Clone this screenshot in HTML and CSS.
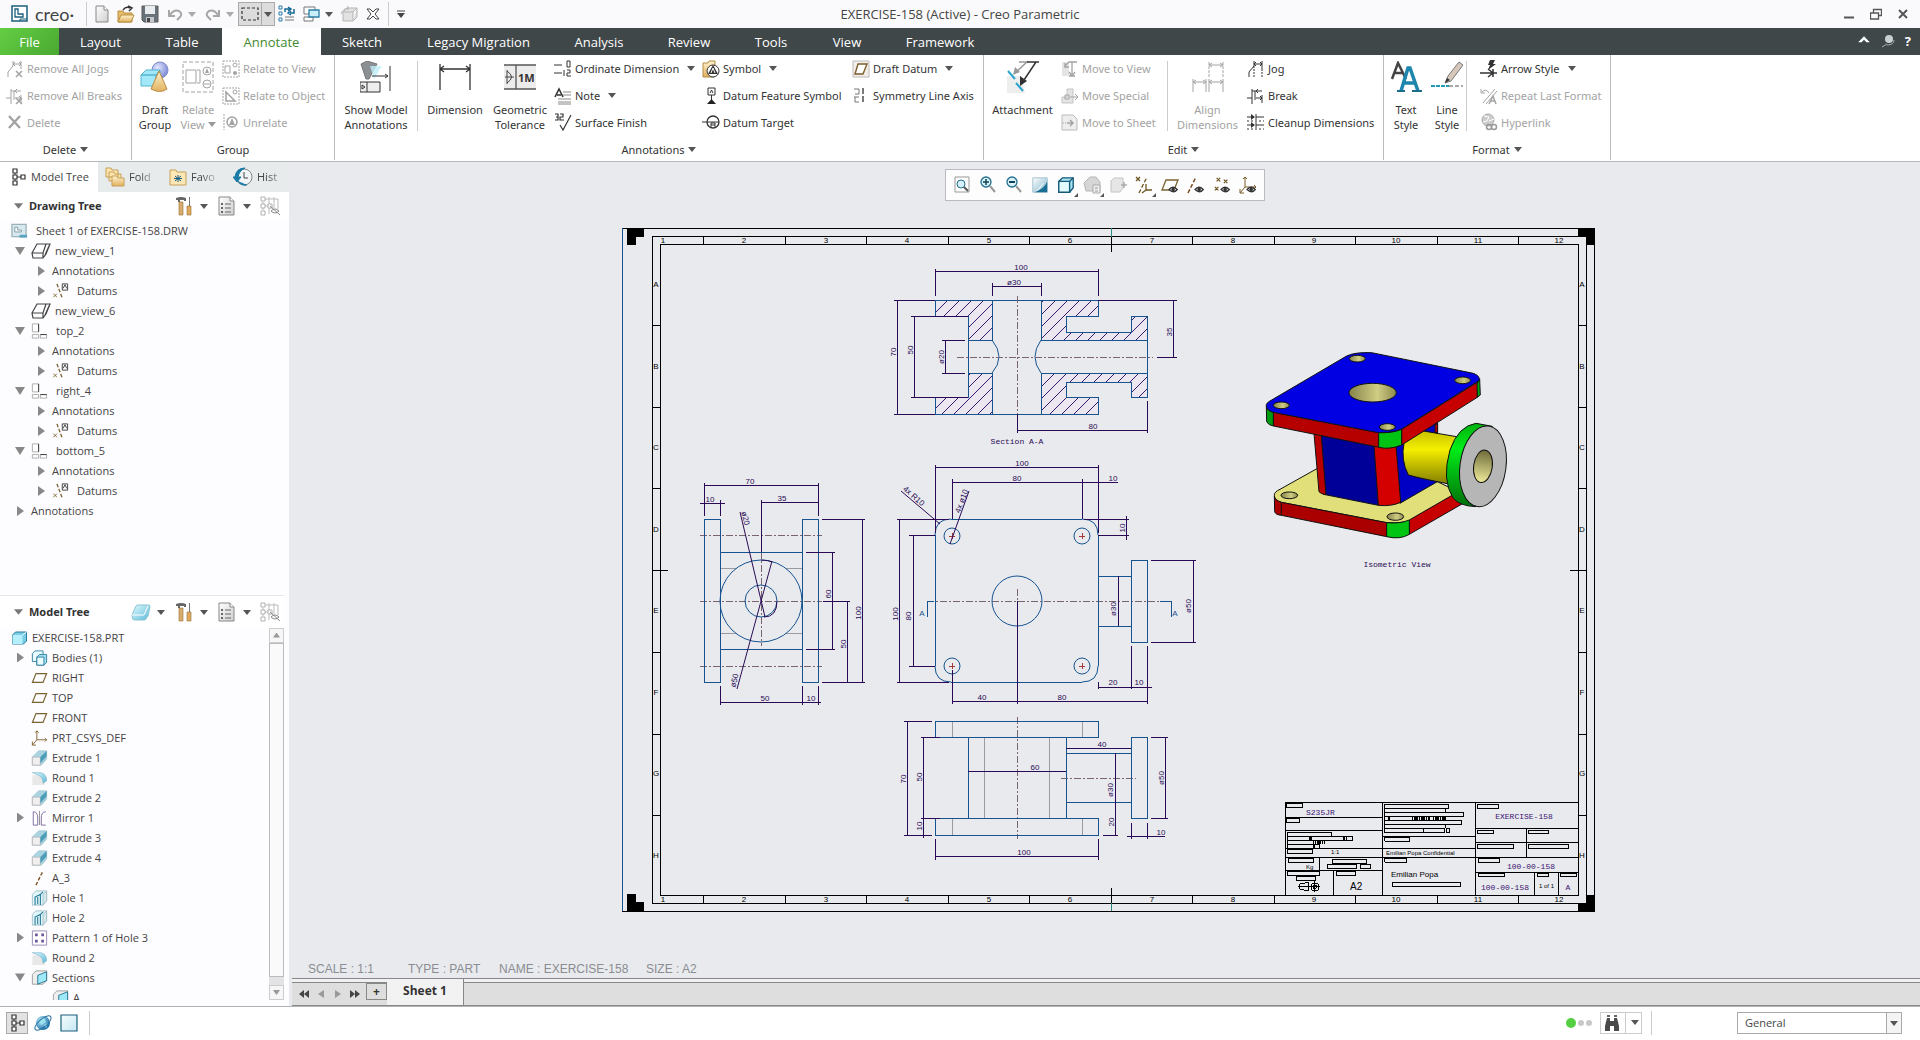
FILE: index.html
```html
<!DOCTYPE html>
<html lang="en">
<head>
<meta charset="utf-8">
<title>EXERCISE-158 (Active) - Creo Parametric</title>
<link rel="stylesheet" href="styles.css">
</head>
<body>
<svg class="sprite" aria-hidden="true">
<defs>
<linearGradient id="g-sky" x1="0" y1="0" x2="1" y2="1"><stop offset="0" stop-color="#e2fbff"/><stop offset="1" stop-color="#5cb9d8"/></linearGradient>
<linearGradient id="g-tone" x1="0" y1="0" x2="1" y2="1"><stop offset="0" stop-color="#fff"/><stop offset="1" stop-color="#7fb5cb"/></linearGradient>
<linearGradient id="g-gold" x1="0" y1="0" x2="0" y2="1"><stop offset="0" stop-color="#fff3cf"/><stop offset="1" stop-color="#e2b15e"/></linearGradient>
<linearGradient id="g-grey" x1="0" y1="0" x2="1" y2="1"><stop offset="0" stop-color="#fff"/><stop offset="1" stop-color="#cfcfcf"/></linearGradient>
<radialGradient id="g-ball" cx=".35" cy=".35" r=".7"><stop offset="0" stop-color="#e4e8ff"/><stop offset="1" stop-color="#7d8ad4"/></radialGradient>
<radialGradient id="g-globe" cx=".35" cy=".35" r=".7"><stop offset="0" stop-color="#bff0ff"/><stop offset="1" stop-color="#1469a5"/></radialGradient>
</defs>
<symbol id="caret" viewBox="0 0 8 5"><path d="M0 0h8L4 5z" fill="currentColor"/></symbol>
<symbol id="logo" viewBox="0 0 18 18"><path d="M1 1h15v15H1z" fill="#fff" stroke="#1c5f7d" stroke-width="1.5"/><path d="M4 4v8h8V9H7V4z" fill="none" stroke="#1c5f7d" stroke-width="1.3"/><path d="M9 16v-2h7" fill="none" stroke="#1c5f7d"/></symbol>
<symbol id="new" viewBox="0 0 18 18"><path d="M3 1h8l4 4v12H3z" fill="url(#g-grey)" stroke="#888"/><path d="M11 1v4h4" fill="#fff" stroke="#888"/></symbol>
<symbol id="open" viewBox="0 0 18 18"><path d="M1 6h5l1 2h8v9H1z" fill="#e7bd6a" stroke="#b98e40"/><path d="M4 10h13l-3 7H1z" fill="url(#g-gold)" stroke="#b98e40"/><path d="M6 5q3-4 7-2M11 1l4 2-3 3" fill="none" stroke="#333" stroke-width="1.5"/></symbol>
<symbol id="save" viewBox="0 0 18 18"><path d="M1 1h16v16H3l-2-2z" fill="#68727a" stroke="#5a5a5a"/><path d="M4 1h10v8H4z" fill="#e9edf0"/><path d="M5 12h8v5H5z" fill="#c4c9cd"/><path d="M6 13h3v4H6z" fill="#454545"/></symbol>
<symbol id="undo" viewBox="0 0 18 18"><path d="M3 5v6h6M4 10q4-6 9-4 4 3 1 6l-3 3" fill="none" stroke="#a6a6a6" stroke-width="2"/></symbol>
<symbol id="redo" viewBox="0 0 18 18"><path d="M15 5v6H9M14 10Q10 4 5 6 1 9 4 12l3 3" fill="none" stroke="#a6a6a6" stroke-width="2"/></symbol>
<symbol id="marquee" viewBox="0 0 18 18"><path d="M1 3h16v12H1z" fill="none" stroke="#333" stroke-width="1.2" stroke-dasharray="3 2"/></symbol>
<symbol id="regen" viewBox="0 0 18 18"><path d="M1 1h3v3H1zM1 7h3v3H1zM1 13h3v3H1z" fill="none" stroke="#2b7fa6"/><path d="M7 12h9M7 15h9" stroke="#777"/><path d="M7 7V4h5M10 2l3 2-3 2M16 4v4h-4M13 6l-3 2 3 2" fill="none" stroke="#156a96" stroke-width="1.5"/></symbol>
<symbol id="windows" viewBox="0 0 18 18"><path d="M1 2h11v7H1z" fill="#fff" stroke="#777"/><path d="M1 12h9v4H1z" fill="#fff" stroke="#777"/><path d="M6 5h10v7H6z" fill="#c9effa" stroke="#2b7fa6" stroke-width="1.3"/></symbol>
<symbol id="greybox" viewBox="0 0 18 18"><path d="M3 7h10v9H3zM3 7l4-4h10l-4 4M13 16l4-4V3" fill="#e2e2e2" stroke="#b5b5b5"/><path d="M1 9q2-6 8-6l-2-2M9 3L7 5" fill="none" stroke="#b5b5b5"/></symbol>
<symbol id="closewin" viewBox="0 0 18 18"><path d="M3 4h3l3 3 3-3h3l-4 5 4 5h-3l-3-3-3 3H3l4-5z" fill="#fff" stroke="#444"/></symbol>
<symbol id="jogs" viewBox="0 0 18 18"><path d="M2 17v-5l5-6V1M15 1v8M7 4h8M9 2L7 4l2 2M13 2l2 2-2 2" fill="none" stroke="currentColor"/></symbol>
<symbol id="jogline" viewBox="0 0 18 18"><path d="M7 6v11M15 9v8" stroke="currentColor" stroke-dasharray="2 1"/></symbol>
<symbol id="break" viewBox="0 0 18 18"><path d="M0 11h5M9 11h6M5 2v15M8 4v9M5 4h10M11 2L9 4l2 2M13 9l2 2-2 2M15 8v8" fill="none" stroke="currentColor"/></symbol>
<symbol id="smallx" viewBox="0 0 18 18"><path d="M10 11l6 6M16 11l-6 6" stroke="currentColor" stroke-width="1.5"/></symbol>
<symbol id="bigx" viewBox="0 0 18 18"><path d="M3 3l11 12M14 3L3 15" stroke="currentColor" stroke-width="2.4"/></symbol>
<symbol id="draftgroup" viewBox="0 0 32 32"><circle cx="21" cy="9" r="8" fill="url(#g-ball)" stroke="#7f8acb"/><path d="M2 14l5-5h14l-4 5zM2 14h15v11H2zM17 14l4-5v10l-4 6z" fill="#a3e8f8" stroke="#57b4cf"/><path d="M20 10l8 18q-7 5-16 0z" fill="url(#g-gold)" stroke="#ba8d43"/></symbol>
<symbol id="relview" viewBox="0 0 32 32"><path d="M1 1h30v30H1z" fill="none" stroke="currentColor" stroke-dasharray="4 2"/><path d="M4 9h10v13H4zM15 9h3v13h-3" fill="none" stroke="currentColor"/><circle cx="25" cy="10" r="4" fill="none" stroke="currentColor"/><path d="M23 12l2-5 2 5z" fill="currentColor"/><circle cx="25" cy="23" r="4" fill="none" stroke="currentColor"/><path d="M22 23h6" stroke="currentColor"/></symbol>
<symbol id="rel1" viewBox="0 0 18 18"><path d="M1 1h16v16H1z" fill="none" stroke="currentColor" stroke-dasharray="2 1"/><path d="M3 6h5v7H3z" fill="none" stroke="currentColor"/><circle cx="13" cy="5" r="2" fill="none" stroke="currentColor"/><circle cx="13" cy="13" r="2" fill="currentColor"/></symbol>
<symbol id="rel2" viewBox="0 0 18 18"><path d="M1 1h16v16H1z" fill="none" stroke="currentColor" stroke-dasharray="2 1"/><path d="M4 5v9h9z" fill="none" stroke="currentColor" stroke-width="1.5"/><circle cx="13" cy="5" r="2" fill="none" stroke="currentColor"/></symbol>
<symbol id="unrel" viewBox="0 0 18 18"><path d="M2 1v16" stroke="currentColor" stroke-dasharray="2 1"/><circle cx="10" cy="9" r="5" fill="none" stroke="currentColor" stroke-width="1.5"/><path d="M7 12l3-7 3 7z" fill="currentColor"/></symbol>
<symbol id="showann" viewBox="0 0 32 32"><path d="M1 3l6-3 10 3-8 15H6z" fill="#8b9094" stroke="#777"/><path d="M10 5l12 0-8 13z" fill="#bfeef8" opacity=".8"/><path d="M12 15h16M25 13l3 2-3 2M30 5v25" fill="none" stroke="#333"/><path d="M0 21h20v10H0zM7 21v10" fill="#eee" stroke="#333"/><path d="M2 24l3 2-3 2z" fill="none" stroke="#333"/></symbol>
<symbol id="dimension" viewBox="0 0 32 32"><path d="M1 3v26M31 3v26M1 8h30M5 5L1 8l4 3M27 5l4 3-4 3" fill="none" stroke="currentColor" stroke-width="1.3"/></symbol>
<symbol id="gtol" viewBox="0 0 32 32"><path d="M0 4h32v24H0z" fill="#ececec"/><path d="M0 4h32M0 28h32M12 4v24" stroke="#555" stroke-width="1.3"/><path d="M1 16h9M3 9v14M3 10q9 6 0 12" fill="none" stroke="#444"/></symbol>
<symbol id="ordinate" viewBox="0 0 18 18"><path d="M0 5h8M0 13h8" stroke="currentColor"/><path d="M13 1h3v6h-3zM10 10v6M13 10h3v3h-3v3h4" fill="none" stroke="currentColor"/></symbol>
<symbol id="note" viewBox="0 0 18 18"><path d="M9 5h8M9 8h8M4 12h13M4 15h13M4 17h13" stroke="#888"/><path d="M1 10L5 2l4 8M3 8h4" fill="none" stroke="#333" stroke-width="1.6"/></symbol>
<symbol id="surface" viewBox="0 0 18 18"><path d="M1 1h3v3H2h2v3H1M6 1h3v3H6v3h4M6 12l3 5L17 2" fill="none" stroke="currentColor" stroke-width="1.2"/></symbol>
<symbol id="symbol" viewBox="0 0 18 18"><path d="M1 3h5l1-2h6v4h-1v12H1z" fill="url(#g-gold)" stroke="#b38b43"/><circle cx="11" cy="11" r="6" fill="#fff" stroke="#333"/><path d="M6 14l5-9 5 9z" fill="#333"/><path d="M9 13l2-5 2 5" fill="none" stroke="#fff"/></symbol>
<symbol id="dfs" viewBox="0 0 18 18"><path d="M6 1h7v7H6zM9.500 8v5" fill="none" stroke="#333"/><path d="M8 6l1.500-3L11 6" fill="none" stroke="#333"/><path d="M5 17l4.500-5 4.500 5z" fill="#222"/></symbol>
<symbol id="dtarget" viewBox="0 0 18 18"><circle cx="11" cy="9" r="6" fill="none" stroke="#333" stroke-width="1.300"/><path d="M0 9h17M9 15v-5h4v5M9 12h4" fill="none" stroke="#333"/></symbol>
<symbol id="ddatum" viewBox="0 0 18 18"><path d="M1 1h16v16H1z" fill="#f4eeea" stroke="#bbb"/><path d="M6 4h9l-4 10H3z" fill="#fff" stroke="#7a5d2d" stroke-width="1.400"/></symbol>
<symbol id="symaxis" viewBox="0 0 18 18"><path d="M2 2h5v5H3M2 10h5M3 10v5h4" fill="none" stroke="#777"/><path d="M11 1v16" stroke="#333" stroke-width="1.300" stroke-dasharray="6 2"/></symbol>
<symbol id="attach" viewBox="0 0 32 32"><path d="M0 15h14l4 17H0z" fill="#eee"/><path d="M12 1h8L8 12" fill="none" stroke="#999" stroke-width="1.500"/><path d="M6 14l2-8 5 5z" fill="#999"/><path d="M20 1h12M29 1L15 22" fill="none" stroke="#333" stroke-width="1.500"/><path d="M13 25l0-10 7 5z" fill="#333"/><path d="M1 10l7 8M9 22l7 8" stroke="#2ba4cd" stroke-width="2"/></symbol>
<symbol id="mview" viewBox="0 0 18 18"><path d="M1 2h7v14H1z" fill="#e4e4e4"/><path d="M3 7l5-5h8M4 3v4h4M11 2v13M8 12l3 4 3-4M8 16h6" fill="none" stroke="currentColor" stroke-width="1.300"/></symbol>
<symbol id="mspecial" viewBox="0 0 18 18"><path d="M6 2h6v14H1v-6h5z" fill="#e4e4e4" stroke="#c4c4c4"/><path d="M4 8h4v4H4zM9 10h8M14 7l3 3-3 3" fill="none" stroke="currentColor"/></symbol>
<symbol id="msheet" viewBox="0 0 18 18"><path d="M1 2h11l4 4v11H1z" fill="#eee" stroke="#bbb"/><path d="M2 10h4" stroke="currentColor" stroke-dasharray="1 1"/><path d="M6 10h6M9 7l3 3-3 3" fill="none" stroke="currentColor" stroke-width="1.500"/></symbol>
<symbol id="align" viewBox="0 0 32 32"><path d="M1 18v13M14 18v13M1 21h13M17 18v13M31 18v13M17 21h14M17 4h14M20 2l-3 2 3 2M28 2l3 2-3 2M4 19l-3 2 3 2M11 19l3 2-3 2M20 19l-3 2 3 2M28 19l3 2-3 2" fill="none" stroke="currentColor"/><path d="M17 1v16M31 1v16" stroke="currentColor" stroke-dasharray="3 1"/></symbol>
<symbol id="cleanup" viewBox="0 0 18 18"><path d="M0 4h5M9 4h8M0 12h5M9 12h8" stroke="currentColor" stroke-width="1.200"/><path d="M0 8h17M0 16h17" stroke="currentColor" stroke-dasharray="2 2"/><path d="M4 1l4 3-4 3zM4 9l4 3-4 3z" fill="currentColor"/><path d="M9 1v6M9 9v6" stroke="currentColor"/></symbol>
<symbol id="textstyle" viewBox="0 0 32 32"><path d="M2 18L8 2l8 16M4 12h9" fill="none" stroke="#444" stroke-width="2.500"/><path d="M11 30L18 7h2l8 23M14 22h11" fill="none" stroke="#1d86ad" stroke-width="3.500"/><path d="M7 30h8M22 30h10" stroke="#1d6d8c" stroke-width="2"/></symbol>
<symbol id="linestyle" viewBox="0 0 32 32"><path d="M14 22l3-7L28 1l4 3-12 16z" fill="#d8c8bb" stroke="#777"/><path d="M14 22l2-5 3 2z" fill="#333"/><path d="M0 25h18" stroke="#219cb8" stroke-width="2" stroke-dasharray="4 1"/><path d="M18 25h14" stroke="#aaa" stroke-width="2" stroke-dasharray="4 2"/></symbol>
<symbol id="arrowstyle" viewBox="0 0 18 18"><path d="M0 13h17M8 9l5 4-5 4M13 9v8" fill="none" stroke="#333" stroke-width="1.500"/><path d="M10 0h5l-2 4h3l-8 6 2-5H8z" fill="#333"/></symbol>
<symbol id="repeat" viewBox="0 0 18 18"><path d="M1 2v4h4M2 5q4-4 7 1M3 16L15 2M6 17L17 4" fill="none" stroke="currentColor"/><path d="M9 17l4-8 3 8M11 14h4" fill="none" stroke="currentColor" stroke-width="1.500"/></symbol>
<symbol id="hyper" viewBox="0 0 18 18"><circle cx="8" cy="7" r="6" fill="#ccc" stroke="#aaa"/><path d="M4 3l5 1-2 4-4 1M9 8l5-2" stroke="#fff" fill="none"/><circle cx="9" cy="14" r="2.500" fill="none" stroke="#999" stroke-width="1.500"/><circle cx="14" cy="14" r="2.500" fill="none" stroke="#999" stroke-width="1.500"/></symbol>
<symbol id="tree" viewBox="0 0 18 18"><path d="M6 5v8M6 9h6" stroke="#333" fill="none"/><path d="M4 1h4v4H4zM4 7h4v4H4zM4 13h4v4H4zM12 7h4v4h-4z" fill="#fff" stroke="#333" stroke-width="1.200"/></symbol>
<symbol id="folders" viewBox="0 0 20 20"><path d="M1 1h5l1 2h6v7H1zM4 5h5l1 2h6v7H4z" fill="#ffe5ac" stroke="#c39f58"/><path d="M7 9h5l1 2h6v8H7z" fill="url(#g-gold)" stroke="#c39f58"/></symbol>
<symbol id="fav" viewBox="0 0 18 18"><path d="M1 2h6l1 2h9v13H1z" fill="#fde7b5" stroke="#c39f58"/><path d="M9 7v7M6 8l6 5M12 8l-6 5M5 10.500h8" stroke="#155c82"/></symbol>
<symbol id="history" viewBox="0 0 20 20"><circle cx="11" cy="10" r="8" fill="#f2f5f7" stroke="#888"/><path d="M11 5v6h4" fill="none" stroke="#444"/><path d="M12 1Q3 1 2 10l-2 0 4 5 4-5H5q1-6 7-9M5 14q3 5 9 4" fill="#1a7ba6" stroke="#1a7ba6"/></symbol>
<symbol id="tools" viewBox="0 0 18 20"><path d="M1 2q5-2 10 0v3H9V4H5v2H3V4H1z" fill="#666"/><path d="M4 6h4v13H4z" fill="#d8ac6c" stroke="#96703a" stroke-width=".6"/><path d="M14 1h1v9h-1z" fill="#777"/><path d="M12 10h4v9h-4z" fill="#e0aa5b" stroke="#96703a" stroke-width=".6"/></symbol>
<symbol id="settings" viewBox="0 0 18 20"><path d="M1 1h11l4 4v14H1z" fill="url(#g-grey)" stroke="#888"/><path d="M12 1v4h4" fill="#fff" stroke="#888"/><path d="M7 8h6M7 12h6M7 16h6" stroke="#666"/><path d="M3 7h2v2H3zM3 11h2v2H3zM3 15h2v2H3z" fill="#666"/></symbol>
<symbol id="hidetree" viewBox="0 0 20 20"><path d="M3 6v8M4 10h5M9 1v17M14 1v11M5 3h13v10" fill="none" stroke="#bbb"/><path d="M1 1h4v4H1zM1 8h4v4H1zM1 15h4v4H1zM8 8h4v4H8z" fill="#fff" stroke="#b0b0b0"/><path d="M11 15q4-4 8 0-4 4-8 0M10 10l10 9" fill="none" stroke="#888"/></symbol>
<symbol id="drw" viewBox="0 0 18 16"><path d="M1 1h15v13H1z" fill="#d7e8ee" stroke="#9db2ba" stroke-width="1.400"/><path d="M4 4v5h7V7H7V4z" fill="#fff" stroke="#829ba5"/><path d="M9 12h8v3H9z" fill="#5ba3c2"/></symbol>
<symbol id="view3d" viewBox="0 0 20 16"><path d="M1 10L6 1h13l-4 10-3 4H2zM1 10h11l3-9M12 10v5M14 12l4-9" fill="none" stroke="#444" stroke-width="1.200"/></symbol>
<symbol id="proj" viewBox="0 0 18 18"><path d="M1 1h7v9H1zM1 13h7v4H1zM10 13h7v4h-7z" fill="#fff" stroke="#a6a6a6"/><path d="M8 1v9M10 13h7" fill="none" stroke="#333"/></symbol>
<symbol id="datums" viewBox="0 0 18 18"><path d="M5 1l6 16" stroke="#7a6330" stroke-width="1.500" stroke-dasharray="4 2"/><path d="M1 12l4 4M5 12l-4 4" stroke="#7a6330"/><path d="M11 1h6v7h-6zM12 6l2-4 2 4" fill="#fff" stroke="#333"/></symbol>
<symbol id="part" viewBox="0 0 16 16"><path d="M1 5l3-3h11v9l-3 3H1z" fill="#77cde5" stroke="#2a7c9c"/><path d="M1 5h10v9H1z" fill="#b5effb"/><path d="M11 5l4-3" stroke="#fff"/></symbol>
<symbol id="slab" viewBox="0 0 20 18"><path d="M1 12l4-9q1-1 2-1h11q1 0 1 2l-2 9-3 4H3q-2 0-2-5z" fill="url(#g-sky)" stroke="#8ac3d4"/><path d="M1 12h12l4-9" fill="none" stroke="#fff"/></symbol>
<symbol id="bodies" viewBox="0 0 18 18"><path d="M1 4l3-3h9v9l-3 3H1z" fill="#e9fbff" stroke="#2a7c9c"/><path d="M6 8l3-3h8v9l-3 3H6z" fill="#9edff0" stroke="#2a7c9c"/><path d="M6 8h8v9H6z" fill="#e9fdff" stroke="#2a7c9c"/></symbol>
<symbol id="plane" viewBox="0 0 18 18"><path d="M5 4h12l-4 10H1z" fill="none" stroke="#7a6330" stroke-width="1.300"/></symbol>
<symbol id="csys" viewBox="0 0 18 18"><path d="M6 1v10h11M6 11l-5 6M4 3l2-2 2 2M15 9l2 2-2 2M1 13v4h4" fill="none" stroke="#7a5a25"/></symbol>
<symbol id="extrude" viewBox="0 0 18 18"><path d="M1 8l7-7h9v9l-6 7H1z" fill="#a9d5e3" stroke="#9cc3d0"/><path d="M1 8h9v9H1z" fill="#f0eeee" stroke="#bbb"/><path d="M10 8l7-7v6l-7 8z" fill="#4d9cb8"/></symbol>
<symbol id="round" viewBox="0 0 18 18"><path d="M1 6h9q5 3 5 11H1z" fill="#e8e8e8"/><path d="M1 3h9q7 1 7 9l-4 3q0-7-5-9z" fill="url(#g-sky)" stroke="#69a9c1" stroke-width=".6"/></symbol>
<symbol id="mirror" viewBox="0 0 18 18"><path d="M9 1v16" stroke="#888"/><path d="M2 2q5 0 5 7v8H2zM16 2q-5 0-5 7v8h5" fill="none" stroke="#75619d"/></symbol>
<symbol id="axis" viewBox="0 0 18 18"><path d="M5 17L13 1" stroke="#7a4d20" stroke-width="1.500" stroke-dasharray="4 2"/></symbol>
<symbol id="hole" viewBox="0 0 18 18"><path d="M1 5l4-4h12v11l-4 5H1z" fill="#e0f6fa" stroke="#a3bec6"/><path d="M13 5v12l4-5V1z" fill="#d5e8ed" stroke="#a3bec6"/><path d="M4 17V8l6-3v12M10 5l3-3M7 16V8" fill="none" stroke="#237797" stroke-width="1.200"/></symbol>
<symbol id="pattern" viewBox="0 0 18 18"><path d="M1 1h16v16H1z" fill="#fff" stroke="#9384b2"/><path d="M4 4h3v3H4zM11 4h3v3h-3zM4 11h3v3H4zM11 11h3v3h-3z" fill="#6f529f"/></symbol>
<symbol id="section" viewBox="0 0 18 18"><path d="M1 5l4-4h12v11l-4 4H1z" fill="#eee" stroke="#999"/><path d="M7 6l10-4v10L7 16z" fill="#9ee9f8" stroke="#226f8d"/></symbol>
<symbol id="zoomfit" viewBox="0 0 20 20"><path d="M3 2h14v15H3z" fill="#fff" stroke="#999"/><circle cx="9" cy="9" r="4" fill="#d6f1f9" stroke="#226f8d"/><path d="M12 12l4 4" stroke="#555" stroke-width="2"/></symbol>
<symbol id="zoomin" viewBox="0 0 20 20"><circle cx="8" cy="7" r="5" fill="#d6f1f9" stroke="#226f8d" stroke-width="1.300"/><path d="M5 7h6M8 4v6" stroke="#145" stroke-width="1.500"/><path d="M12 11l5 6" stroke="#999" stroke-width="2"/></symbol>
<symbol id="zoomout" viewBox="0 0 20 20"><circle cx="8" cy="7" r="5" fill="#d6f1f9" stroke="#226f8d" stroke-width="1.300"/><path d="M5 7h6" stroke="#145" stroke-width="2"/><path d="M12 11l5 6" stroke="#999" stroke-width="2"/></symbol>
<symbol id="repaint" viewBox="0 0 20 20"><path d="M2 2h16v16H2z" fill="url(#g-tone)" stroke="#9fc0cc"/><path d="M4 18Q15 14 18 6v12z" fill="#1a6f94"/><path d="M6 17l8-9" stroke="#fff"/></symbol>
<symbol id="cube" viewBox="0 0 20 20"><path d="M2 6l4-4h12v11l-4 5H2z" fill="#a9e4f3" stroke="#145a78" stroke-width="1.500"/><path d="M2 6h12v12H2zM14 6l4-4" fill="#e2fbff" stroke="#145a78" stroke-width="1.500"/></symbol>
<symbol id="saved" viewBox="0 0 20 20"><path d="M2 8l6-6h6l4 5v9H4z" fill="#d6d6d6" stroke="#b5b5b5"/><path d="M11 10h7v8h-7z" fill="#eee" stroke="#aaa"/><path d="M13 13h3M13 16h3" stroke="#999"/></symbol>
<symbol id="boxplus" viewBox="0 0 20 20"><path d="M3 6l3-3h9v10l-3 4H3z" fill="#e6e6e6" stroke="#c4c4c4"/><path d="M13 10h6M16 7v6" stroke="#aaa" stroke-width="1.500"/></symbol>
<symbol id="datumdisp" viewBox="0 0 20 20"><path d="M2 2l4 4M6 2L2 6M12 9v6h6M12 15l-4 3" fill="none" stroke="#6e5520" stroke-width="1.300"/><path d="M5 18l8-16" stroke="#6e5520" stroke-width="1.300" stroke-dasharray="4 2"/></symbol>
<symbol id="eye" viewBox="0 0 20 20"><path d="M9 15q4-5 9 0-4 5-9 0z" fill="#fff" stroke="#333" stroke-width="1.500"/><circle cx="13.500" cy="15" r="2" fill="#333"/></symbol>
<symbol id="points" viewBox="0 0 20 20"><path d="M4 2l4 4M8 2L4 6M12 4l4 4M16 4l-4 4M2 12l4 4M6 12l-4 4" stroke="#6e5520" stroke-width="1.300"/></symbol>
<symbol id="globe" viewBox="0 0 20 20"><circle cx="10" cy="10" r="7" fill="url(#g-globe)"/><path d="M6 6l5-1 2 4-5 3zM11 12l4-2-2 5z" fill="#9ce2ee"/><ellipse cx="10" cy="10" rx="10" ry="4" transform="rotate(-40 10 10)" fill="none" stroke="#276f9b"/></symbol>
<symbol id="plainbox" viewBox="0 0 18 18"><path d="M1 1h16v16H1z" fill="url(#g-sky)" fill-opacity=".35" stroke="#1c5f7d" stroke-width="1.200"/></symbol>
<symbol id="binoc" viewBox="0 0 18 18"><path d="M4 4h3v3h4V4h3l2 8v5h-5v-5H7v5H2v-5z" fill="#4a4a4a"/><path d="M4 1h3v2H4zM11 1h3v2h-3z" fill="#666"/></symbol>
</svg>

<div class="app">
<header class="titlebar">
  <div class="quick">
    <svg class="i18"><use href="#logo"/></svg><span class="brand">creo·</span><span class="vr"></span>
    <button class="qb" aria-label="New"><svg class="i18"><use href="#new"/></svg></button>
    <button class="qb" aria-label="Open"><svg class="i18"><use href="#open"/></svg></button>
    <button class="qb" aria-label="Save"><svg class="i18"><use href="#save"/></svg></button>
    <button class="qb wide" aria-label="Undo"><svg class="i18"><use href="#undo"/></svg><svg class="car faint"><use href="#caret"/></svg></button>
    <button class="qb wide" aria-label="Redo"><svg class="i18"><use href="#redo"/></svg><svg class="car faint"><use href="#caret"/></svg></button>
    <button class="qb on" aria-label="Select"><svg class="i18"><use href="#marquee"/></svg><i></i><svg class="car"><use href="#caret"/></svg></button>
    <button class="qb" aria-label="Regenerate"><svg class="i18"><use href="#regen"/></svg></button>
    <button class="qb wide" aria-label="Windows"><svg class="i18"><use href="#windows"/></svg><svg class="car"><use href="#caret"/></svg></button>
    <button class="qb" aria-label="Model"><svg class="i18"><use href="#greybox"/></svg></button>
    <button class="qb" aria-label="Close window"><svg class="i18"><use href="#closewin"/></svg></button>
    <span class="vr"></span>
    <button class="qb slim" aria-label="Customize"><svg class="more-car" viewBox="0 0 8 8"><path d="M0 1h8" stroke="#444"/><path d="M0 3h8L4 8z" fill="#444"/></svg></button>
  </div>
  <h1 class="title">EXERCISE-158 (Active) - Creo Parametric</h1>
  <div class="winbtns">
    <button aria-label="Minimize"><svg viewBox="0 0 12 12"><path d="M1 9.500h10" stroke="#555" stroke-width="2"/></svg></button>
    <button aria-label="Restore"><svg viewBox="0 0 12 12"><path d="M3.500 5V1.500h8v6H9M.5 5h8v6h-8z" fill="none" stroke="#555" stroke-width="1.300"/></svg></button>
    <button aria-label="Close"><svg viewBox="0 0 12 12"><path d="M2 2l8 8M10 2l-8 8" stroke="#555" stroke-width="2"/></svg></button>
  </div>
</header>

<nav class="tabs">
  <button class="file">File</button><button>Layout</button><button>Table</button><button class="active">Annotate</button><button>Sketch</button><button>Legacy Migration</button><button>Analysis</button><button>Review</button><button>Tools</button><button>View</button><button>Framework</button>
  <span class="tabtools">
    <button aria-label="Collapse ribbon"><svg viewBox="0 0 12 12"><path d="M1 7l5-5 5 5H8L6 5 4 7z" fill="#fff"/></svg></button>
    <button aria-label="Search"><svg viewBox="0 0 14 14"><circle cx="8" cy="5" r="4" fill="#c9d0d4"/><path d="M13 6q0 5-7 5M6 10l-5 3" stroke="#aaa" fill="none"/></svg></button>
    <button aria-label="Help" class="help">?</button>
  </span>
</nav>

<section class="ribbon">
  <div class="grp g-delete">
    <div class="body">
      <div class="cmds"><button disabled><svg class="i18"><use href="#jogs"/><use href="#smallx"/></svg>Remove All Jogs</button><button disabled><svg class="i18"><use href="#break"/><use href="#smallx"/></svg>Remove All Breaks</button><button disabled><svg class="i18"><use href="#bigx"/></svg>Delete</button></div>
    </div>
    <button class="glabel">Delete<svg class="car"><use href="#caret"/></svg></button>
  </div>
  <div class="grp g-group">
    <div class="body">
      <button class="big"><svg class="i32"><use href="#draftgroup"/></svg><span>Draft<br>Group</span></button>
      <button class="big" disabled><svg class="i32"><use href="#relview"/></svg><span>Relate<br>View<svg class="car"><use href="#caret"/></svg></span></button>
      <div class="cmds"><button disabled><svg class="i18"><use href="#rel1"/></svg>Relate to View</button><button disabled><svg class="i18"><use href="#rel2"/></svg>Relate to Object</button><button disabled><svg class="i18"><use href="#unrel"/></svg>Unrelate</button></div>
    </div>
    <span class="glabel">Group</span>
  </div>
  <div class="grp g-annot">
    <div class="body">
      <button class="big"><svg class="i32"><use href="#showann"/></svg><span>Show Model<br>Annotations</span></button>
      <i class="rule"></i>
      <button class="big"><svg class="i32"><use href="#dimension"/></svg><span>Dimension</span></button>
      <button class="big"><svg class="i32"><use href="#gtol"/><text x="14" y="21" class="icotext">1M</text></svg><span>Geometric<br>Tolerance</span></button>
      <div class="cmds"><button><svg class="i18"><use href="#ordinate"/></svg>Ordinate Dimension<svg class="car"><use href="#caret"/></svg></button><button><svg class="i18"><use href="#note"/></svg>Note<svg class="car"><use href="#caret"/></svg></button><button><svg class="i18"><use href="#surface"/></svg>Surface Finish</button></div>
      <div class="cmds"><button><svg class="i18"><use href="#symbol"/></svg>Symbol<svg class="car"><use href="#caret"/></svg></button><button><svg class="i18"><use href="#dfs"/></svg>Datum Feature Symbol</button><button><svg class="i18"><use href="#dtarget"/></svg>Datum Target</button></div>
      <div class="cmds"><button><svg class="i18"><use href="#ddatum"/></svg>Draft Datum<svg class="car"><use href="#caret"/></svg></button><button><svg class="i18"><use href="#symaxis"/></svg>Symmetry Line Axis</button></div>
    </div>
    <button class="glabel">Annotations<svg class="car"><use href="#caret"/></svg></button>
  </div>
  <div class="grp g-edit">
    <div class="body">
      <button class="big"><svg class="i32"><use href="#attach"/></svg><span>Attachment</span></button>
      <div class="cmds"><button disabled><svg class="i18"><use href="#mview"/></svg>Move to View</button><button disabled><svg class="i18"><use href="#mspecial"/></svg>Move Special</button><button disabled><svg class="i18"><use href="#msheet"/></svg>Move to Sheet</button></div>
      <i class="rule"></i>
      <button class="big" disabled><svg class="i32"><use href="#align"/></svg><span>Align<br>Dimensions</span></button>
      <div class="cmds"><button><svg class="i18"><use href="#jogs"/><use href="#jogline"/></svg>Jog</button><button><svg class="i18"><use href="#break"/></svg>Break</button><button><svg class="i18"><use href="#cleanup"/></svg>Cleanup Dimensions</button></div>
    </div>
    <button class="glabel">Edit<svg class="car"><use href="#caret"/></svg></button>
  </div>
  <div class="grp g-format">
    <div class="body">
      <button class="big"><svg class="i32"><use href="#textstyle"/></svg><span>Text<br>Style</span></button>
      <button class="big"><svg class="i32"><use href="#linestyle"/></svg><span>Line<br>Style</span></button>
      <i class="rule"></i>
      <div class="cmds"><button><svg class="i18"><use href="#arrowstyle"/></svg>Arrow Style<svg class="car"><use href="#caret"/></svg></button><button disabled><svg class="i18"><use href="#repeat"/></svg>Repeat Last Format</button><button disabled><svg class="i18"><use href="#hyper"/></svg>Hyperlink</button></div>
    </div>
    <button class="glabel">Format<svg class="car"><use href="#caret"/></svg></button>
  </div>
</section>

<main class="work">
<aside class="side">
  <div class="sidetabs">
    <button class="active"><svg class="i18"><use href="#tree"/></svg>Model Tree</button><button><svg class="i20"><use href="#folders"/></svg><span class="fade">Fold</span></button><button><svg class="i18"><use href="#fav"/></svg><span class="fade">Favo</span></button><button><svg class="i20"><use href="#history"/></svg><span class="fade">Hist</span></button>
  </div>
  <section class="panel top">
    <header class="phead"><svg class="car tw"><use href="#caret"/></svg><h2>Drawing Tree</h2>
      <button aria-label="Tree tools"><svg class="i20"><use href="#tools"/></svg><svg class="car"><use href="#caret"/></svg></button><button aria-label="Tree settings"><svg class="i20"><use href="#settings"/></svg><svg class="car"><use href="#caret"/></svg></button><button aria-label="Hide tree"><svg class="i20"><use href="#hidetree"/></svg></button></header>
    <ul class="list">
      <li class="l0"><svg class="ic"><use href="#drw"/></svg><span class="pad">Sheet 1 of EXERCISE-158.DRW</span></li>
      <li class="l1"><b class="dn"></b><svg class="ic w20"><use href="#view3d"/></svg>new_view_1</li>
      <li class="l2"><b class="rt"></b>Annotations</li>
      <li class="l2"><b class="rt"></b><svg class="ic"><use href="#datums"/></svg><span class="pad">Datums</span></li>
      <li class="l1"><b></b><svg class="ic w20"><use href="#view3d"/></svg>new_view_6</li>
      <li class="l1"><b class="dn"></b><svg class="ic"><use href="#proj"/></svg><span class="pad">top_2</span></li>
      <li class="l2"><b class="rt"></b>Annotations</li>
      <li class="l2"><b class="rt"></b><svg class="ic"><use href="#datums"/></svg><span class="pad">Datums</span></li>
      <li class="l1"><b class="dn"></b><svg class="ic"><use href="#proj"/></svg><span class="pad">right_4</span></li>
      <li class="l2"><b class="rt"></b>Annotations</li>
      <li class="l2"><b class="rt"></b><svg class="ic"><use href="#datums"/></svg><span class="pad">Datums</span></li>
      <li class="l1"><b class="dn"></b><svg class="ic"><use href="#proj"/></svg><span class="pad">bottom_5</span></li>
      <li class="l2"><b class="rt"></b>Annotations</li>
      <li class="l2"><b class="rt"></b><svg class="ic"><use href="#datums"/></svg><span class="pad">Datums</span></li>
      <li class="l1"><b class="rt"></b>Annotations</li>
    </ul>
  </section>
  <section class="panel bottom">
    <header class="phead"><svg class="car tw"><use href="#caret"/></svg><h2>Model Tree</h2>
      <button aria-label="Display"><svg class="i20"><use href="#slab"/></svg><svg class="car"><use href="#caret"/></svg></button><button aria-label="Tree tools"><svg class="i20"><use href="#tools"/></svg><svg class="car"><use href="#caret"/></svg></button><button aria-label="Tree settings"><svg class="i20"><use href="#settings"/></svg><svg class="car"><use href="#caret"/></svg></button><button aria-label="Hide tree"><svg class="i20"><use href="#hidetree"/></svg></button></header>
    <div class="scroller">
    <ul class="list">
      <li class="l0"><svg class="ic"><use href="#part"/></svg>EXERCISE-158.PRT</li>
      <li class="l1"><b class="rt"></b><svg class="ic"><use href="#bodies"/></svg>Bodies (1)</li>
      <li class="l1"><b></b><svg class="ic"><use href="#plane"/></svg>RIGHT</li>
      <li class="l1"><b></b><svg class="ic"><use href="#plane"/></svg>TOP</li>
      <li class="l1"><b></b><svg class="ic"><use href="#plane"/></svg>FRONT</li>
      <li class="l1"><b></b><svg class="ic"><use href="#csys"/></svg>PRT_CSYS_DEF</li>
      <li class="l1"><b></b><svg class="ic"><use href="#extrude"/></svg>Extrude 1</li>
      <li class="l1"><b></b><svg class="ic"><use href="#round"/></svg>Round 1</li>
      <li class="l1"><b></b><svg class="ic"><use href="#extrude"/></svg>Extrude 2</li>
      <li class="l1"><b class="rt"></b><svg class="ic"><use href="#mirror"/></svg>Mirror 1</li>
      <li class="l1"><b></b><svg class="ic"><use href="#extrude"/></svg>Extrude 3</li>
      <li class="l1"><b></b><svg class="ic"><use href="#extrude"/></svg>Extrude 4</li>
      <li class="l1"><b></b><svg class="ic"><use href="#axis"/></svg>A_3</li>
      <li class="l1"><b></b><svg class="ic"><use href="#hole"/></svg>Hole 1</li>
      <li class="l1"><b></b><svg class="ic"><use href="#hole"/></svg>Hole 2</li>
      <li class="l1"><b class="rt"></b><svg class="ic"><use href="#pattern"/></svg>Pattern 1 of Hole 3</li>
      <li class="l1"><b></b><svg class="ic"><use href="#round"/></svg>Round 2</li>
      <li class="l1"><b class="dn"></b><svg class="ic"><use href="#section"/></svg>Sections</li>
      <li class="l2"><b></b><svg class="ic"><use href="#section"/></svg>A</li>
    </ul>
    <div class="sbar"><span class="sb up"></span><span class="thumb"></span><span class="sb down"></span></div>
    </div>
  </section>
</aside>

<div class="stage">
<div class="canvas">
<div class="viewbar" role="toolbar">
  <button aria-label="Refit"><svg class="i20"><use href="#zoomfit"/></svg></button><button aria-label="Zoom in"><svg class="i20"><use href="#zoomin"/></svg></button><button aria-label="Zoom out"><svg class="i20"><use href="#zoomout"/></svg></button><button aria-label="Repaint"><svg class="i18"><use href="#repaint"/></svg></button><button class="more" aria-label="Display style"><svg class="i18"><use href="#cube"/></svg></button><button class="more" aria-label="Saved views"><svg class="i20"><use href="#saved"/></svg></button><button aria-label="Regenerate view"><svg class="i20"><use href="#boxplus"/></svg></button><button class="more" aria-label="Datum display"><svg class="i20"><use href="#datumdisp"/></svg></button><button aria-label="Planes"><svg class="i18"><use href="#plane"/><use href="#eye"/></svg></button><button aria-label="Axes"><svg class="i18"><use href="#axis" x="-4"/><use href="#eye"/></svg></button><button aria-label="Points"><svg class="i18"><use href="#points"/><use href="#eye"/></svg></button><button aria-label="Coordinate systems"><svg class="i18"><use href="#csys"/><use href="#eye"/></svg></button>
</div>
<svg class="sheet" viewBox="290 162 1630 816">
<defs>
<pattern id="hatch" width="12" height="12" patternUnits="userSpaceOnUse"><path d="M0 0h12v12H0z" fill="#ebe7f0"/><path d="M-1 13L13-1M-1 1L1-1M11 13L13 11" stroke="#3a1a6e" stroke-width="1" fill="none"/></pattern>
<linearGradient id="bore" x1="0" x2="1"><stop offset="0" stop-color="#86834c"/><stop offset=".6" stop-color="#cfcc83"/><stop offset="1" stop-color="#8d8a50"/></linearGradient>
<linearGradient id="bore2" x1="0" y1="0" x2="0" y2="1"><stop offset="0" stop-color="#6d6a3a"/><stop offset="1" stop-color="#efeb9a"/></linearGradient>
<linearGradient id="pipe" x1="0" y1="0" x2="0" y2="1"><stop offset="0" stop-color="#c9c200"/><stop offset=".35" stop-color="#f4ee00"/><stop offset="1" stop-color="#857f00"/></linearGradient>
<linearGradient id="rim" x1="0" y1="0" x2="0" y2="1"><stop offset="0" stop-color="#00b010"/><stop offset=".3" stop-color="#00ee18"/><stop offset="1" stop-color="#006e0a"/></linearGradient>
</defs>
<!-- frame -->
<g class="frame">
<path d="M622 228H1594V911H622M652 236H1586V903H652zM660 244H1578V895H660z"/>
<path d="M703 236v8M785 236v8M866 236v8M948 236v8M1029 236v8M1192 236v8M1274 236v8M1355 236v8M1437 236v8M1518 236v8M703 895v8M785 895v8M866 895v8M948 895v8M1029 895v8M1192 895v8M1274 895v8M1355 895v8M1437 895v8M1518 895v8M1111 236v16M1111 888v16"/>
<path d="M652 325h8M652 407h8M652 488h8M652 570h16M652 652h8M652 734h8M652 815h8M1578 325h8M1578 407h8M1578 488h8M1570 570h16M1578 652h8M1578 734h8M1578 815h8"/>
<path class="blk" d="M627 228h17v9h-8v8h-9zM1578 228h17v17h-8v-8h-9zM627 911h17v-9h-8v-8h-9zM1595 911h-17v-8h8v-8h9z"/>
<path class="teal" d="M1111 228v9M1111 903v8"/><path class="edge" d="M622 228V911"/>
</g>
<g class="zone">
<g id="cols"><text x="663" y="243">1</text><text x="744" y="243">2</text><text x="826" y="243">3</text><text x="907" y="243">4</text><text x="989" y="243">5</text><text x="1070" y="243">6</text><text x="1152" y="243">7</text><text x="1233" y="243">8</text><text x="1314" y="243">9</text><text x="1396" y="243">10</text><text x="1478" y="243">11</text><text x="1559" y="243">12</text></g>
<use href="#cols" y="659"/>
<g id="rows"><text x="656" y="287">A</text><text x="656" y="369">B</text><text x="656" y="450">C</text><text x="656" y="532">D</text><text x="656" y="613">E</text><text x="656" y="695">F</text><text x="656" y="776">G</text><text x="656" y="858">H</text></g>
<use href="#rows" x="926"/>
</g>
<!-- section A-A -->
<g class="cut"><path d="M935 300H992V340H968V316H935z"/><path d="M935 414H992V373H968V397H935z"/><path d="M1041 300H1098V316H1066V332H1131V316H1147V340H1041z"/><path d="M1041 414H1098V397H1066V382H1131V397H1147V373H1041z"/></g>
<path class="edge" d="M992 300H1041M992 414H1041M968 340V373M1147 340V373"/>
<path class="edge soft" d="M992 340Q1006 357 992 373M1041 340Q1029 357 1041 373"/>
<path class="ctr" d="M1017 296V416M957 357H1153"/>
<path class="dim" d="M935 269V296M1098 269V296M935 271H1098M992 283V296M1041 283V296M992 286H1041M894 300H935M894 414H935M897 300V414M911 316H968M911 397H968M914 316V397M942 340H965M942 373H965M945 340V373M1098 300H1177M1157 357H1177M1173 300V357M1017 414V433M1147 401V433M1017 430H1147"/>
<!-- left view -->
<path class="grey" d="M720 568H737M786 568H802M720 633H737M786 633H802"/>
<path class="ctr" d="M700 535H822M700 666H822M700 601H822M761 552V646"/>
<path class="edge" d="M704 519H720V682H704zM802 519H818V682H802zM720 552H802M720 649H802"/>
<g class="edge soft"><circle cx="761" cy="601" r="41"/><circle cx="761" cy="601" r="16"/></g>
<path class="dim" d="M704 483V516M818 483V516M704 485H818M700 503H725M720 500V516M761 500V552M761 502H818M806 552H835M806 649H835M832 552V649M823 601H850M847 601V682M822 519H865M822 682H865M862 519V682M720 686V705M802 686V705M818 686V705M720 702H821"/>
<path class="dim soft" d="M740 512L765 617M772 561L737 689M761 560Q768 560 772 562M777 601Q777 617 764 617"/>
<!-- front view -->
<path class="ctr" d="M927 601H1171M1017 589V614"/>
<path class="edge" d="M951 519H1082M1098 535V666M1082 682H951M935 666V535M1098 576H1131M1098 626H1131M1131 560H1147V642H1131z"/>
<g class="edge soft"><path d="M935 535Q935 519 951 519M1082 519Q1098 519 1098 535M1098 666Q1098 682 1082 682M951 682Q935 682 935 666"/><circle cx="952" cy="536" r="8"/><circle cx="1082" cy="536" r="8"/><circle cx="952" cy="666" r="8"/><circle cx="1082" cy="666" r="8"/><circle cx="1017" cy="601" r="25"/></g>
<path class="red" d="M949 536h6M952 533v6M1079 536h6M1082 533v6M949 666h6M952 663v6M1079 666h6M1082 663v6"/>
<path class="edge" d="M934 601H927V617M1160 601H1171V617"/>
<path class="dim" d="M935 465V533M1098 465V533M935 467H1098M952 479V519M1082 479V519M952 482H1118M1084 519H1129M1098 535H1129M1126 516V540M897 519H949M897 682H949M899 519V682M909 535H935M909 666H935M913 535V666M1118 576V626M1151 560H1196M1151 642H1196M1193 560V642M952 670V704M1017 601V704M1147 646V704M952 701H1147M1098 682V689M1131 646V689M1098 687H1152"/>
<path class="dim soft" d="M901 491L940 524M969 491L950 544"/>
<!-- bottom view -->
<path class="grey" d="M952 721V737M1082 721V737M952 818V835M1082 818V835M984 737V818M1049 737V818"/>
<path class="ctr" d="M1017 717V839M1061 778H1136"/>
<path class="edge" d="M935 721H1098V737H935zM935 818H1098V835H935zM968 737V818M1066 737V818M1066 753H1131M1066 802H1131M1131 737H1147V818H1131z"/>
<path class="dim" d="M904 721H932M904 835H932M907 721V835M921 737H940M921 818H940M923 737V838M935 839V860M1098 839V860M935 856H1098M968 771H1066M1066 748H1131M1115 753V835M1103 835H1118M1151 737H1168M1151 818H1168M1165 737V818M1131 823V839M1147 823V839M1127 836H1165"/>
<g class="val">
<text x="1021" y="270">100</text><text x="1014" y="285">ø30</text><text x="1093" y="429">80</text>
<text x="750" y="484">70</text><text x="710" y="502">10</text><text x="782" y="501">35</text><text x="765" y="701">50</text><text x="811" y="701">10</text>
<text x="1022" y="466">100</text><text x="1017" y="481">80</text><text x="1113" y="481">10</text><text x="982" y="700">40</text><text x="1062" y="700">80</text><text x="1113" y="685">20</text><text x="1139" y="685">10</text>
<text x="1024" y="855">100</text><text x="1035" y="770">60</text><text x="1102" y="747">40</text><text x="1161" y="835">10</text>
<text transform="translate(896 352) rotate(-90)">70</text><text transform="translate(913 350) rotate(-90)">50</text><text transform="translate(944 357) rotate(-90)">ø20</text><text transform="translate(1172 332) rotate(-90)">35</text>
<text transform="translate(831 594) rotate(-90)">60</text><text transform="translate(846 644) rotate(-90)">50</text><text transform="translate(861 613) rotate(-90)">100</text>
<text transform="translate(1125 528) rotate(-90)">10</text><text transform="translate(898 614) rotate(-90)">100</text><text transform="translate(911 616) rotate(-90)">80</text><text transform="translate(1116 609) rotate(-90)">ø30</text><text transform="translate(1191 606) rotate(-90)">ø50</text>
<text transform="translate(906 779) rotate(-90)">70</text><text transform="translate(922 777) rotate(-90)">50</text><text transform="translate(922 826) rotate(-90)">10</text><text transform="translate(1113 790) rotate(-90)">ø30</text><text transform="translate(1114 822) rotate(-90)">20</text><text transform="translate(1164 778) rotate(-90)">ø50</text>
<text transform="translate(743 519) rotate(76)">ø20</text><text transform="translate(737 681) rotate(-76)">ø50</text><text transform="translate(912 498) rotate(41)">4x R10</text><text transform="translate(964 502) rotate(-70)">4x ø10</text>
</g>
<g class="val blue"><text x="922" y="616">A</text><text x="1175" y="616">A</text></g>
<g class="cap"><text x="1017" y="444">Section A-A</text><text x="1397" y="567">Isometric View</text></g>
<!-- isometric view -->
<g class="iso" transform="translate(1240 340) scale(.3333)">
<path fill="#e0df7a" d="M103 466Q102 456 120 448L245 378 500 380 660 458 510 542Q490 550 440 548L124 487Q102 480 103 466z"/>
<path fill="#ab0000" d="M103 468L104 515Q106 524 124 526L440 590V548L124 487Q104 480 103 468z"/><path d="M124 487V526" fill="none"/>
<path fill="#c60000" d="M508 540L650 458 680 484 508 583z"/><path fill="#00c414" d="M440 548Q480 552 508 540V583Q480 600 440 590z"/>
<ellipse cx="148" cy="466" rx="25" ry="10" fill="url(#bore)"/><ellipse cx="466" cy="530" rx="25" ry="11" fill="url(#bore)"/>
<path fill="#000098" d="M240 280L415 310V496L250 463z"/><path fill="#0000c4" d="M465 310L592 245V425L480 490z"/><path fill="#b80000" d="M222 280L244 285 258 464Q242 462 237 455zM585 255L593 250V278H585z"/><path fill="#d40000" d="M402 315L468 315 482 487Q455 500 415 496z"/>
<path fill="url(#pipe)" d="M492 310Q520 278 550 273L650 290 622 431Q540 415 505 405Q482 360 492 310z"/>
<path fill="url(#rim)" d="M757 259L708 250Q655 258 630 330 604 420 640 475 660 498 707 500z"/>
<ellipse cx="729" cy="379" rx="69" ry="122" transform="rotate(8 729 379)" fill="#b6b6b6"/><ellipse cx="729" cy="379" rx="28" ry="49" transform="rotate(8 729 379)" fill="url(#bore2)"/>
<path fill="#c60000" d="M485 268L715 125 712 172 485 315z"/><path fill="#b60000" d="M100 217L418 278V322L100 258z"/>
<path fill="#009a10" d="M79 200L80 245Q85 256 100 258V217Q82 212 79 200z"/><path fill="#00c414" d="M416 278Q455 280 485 268V315Q450 330 416 322z"/><path fill="#00a410" d="M711 132L719 116 721 165 712 172z"/>
<path fill="#0000e2" d="M79 198Q76 190 95 180L320 48Q345 36 395 38L700 100Q722 108 717 122L500 258Q475 279 415 278L100 217Q79 210 79 198z"/>
<ellipse cx="398" cy="158" rx="71" ry="28" fill="url(#bore)"/><ellipse cx="352" cy="56" rx="24" ry="10" fill="url(#bore)"/><ellipse cx="668" cy="121" rx="24" ry="10" fill="url(#bore)"/><ellipse cx="124" cy="196" rx="24" ry="10" fill="url(#bore)"/><ellipse cx="442" cy="261" rx="24" ry="10" fill="url(#bore)"/>
</g>
<!-- title block -->
<g class="block" transform="translate(1270 790) scale(.3333)">
<path d="M46 37V316M337 37V316M616 37V316M46 37H925M46 82H337M46 121H337M46 175H616M46 202H925M46 241H337M337 139H616M616 115H925M616 157H925M616 247H925M769 115V202M148 202V241M190 241V316M793 247V316M865 247V316"/>
<path d="M49 40h49v13h-49zM49 86h40v12h-40zM52 127h133v12h-133zM52 139h196v13h-196zM52 152h80v11h-80zM52 163h80v12h-80zM133 163h16v12h-16zM52 178h76v13h-76zM55 205h76v13h-76zM187 208h103v12h-103zM172 223h87v13h-87zM271 223h31v13h-31zM52 244h97v13h-97zM79 259h58v13h-58zM199 244h58v13h-58zM343 43h193v12h-193zM343 67h238v12h-238zM343 91h232v13h-232zM343 115h181v13h-181zM531 115h8v13h-8zM345 142h74v12h-74zM345 205h65v12h-65zM367 277h205v13h-205zM622 43h64v12h-64zM622 121h49v11h-49zM776 121h60v11h-60zM622 163h109v12h-109zM775 163h121v12h-121zM625 205h64v12h-64zM625 250h80v10h-80zM802 250h34v10h-34zM871 250h49v10h-49zM345 55v12M345 79v12M345 104v11M528 55v12M528 104v11M90 282L117 277V303L90 298zM84 291H150M135 273V307"/>
<circle cx="135" cy="291" r="12"/><circle cx="135" cy="291" r="6"/>
<path class="scrib" d="M355 85h6M425 85h56M488 85h44M117 144h8M220 144h10M134 158h32M458 121h4"/>
</g>
<g class="tb"><text class="v" x="1306" y="815">S235JR</text><text class="v mid" x="1524" y="819">EXERCISE-158</text><text class="v mid" x="1531" y="869">100-00-158</text><text class="v mid" x="1505" y="890">100-00-158</text><text class="v mid" x="1568" y="890">A</text></g>
<g class="tb2"><text x="1306" y="869">Kg</text><text x="1331" y="854">1:1</text><text class="pop" x="1391" y="877">Emilian Popa</text><text class="a2" x="1350" y="890">A2</text><text class="tiny" x="1386" y="855">Emilian Popa Confidential</text><text class="tiny" x="1539" y="888">1 of 1</text></g>
</svg>
<div class="info"><span>SCALE : 1:1</span><span>TYPE : PART</span><span>NAME : EXERCISE-158</span><span>SIZE : A2</span></div>
</div>
<div class="sheetbar">
  <button aria-label="First sheet"><svg viewBox="0 0 12 10"><path d="M6 1v8L1 5zM11 1v8L6 5z" fill="#444"/></svg></button><button aria-label="Previous sheet"><svg viewBox="0 0 12 10"><path d="M9 1v8L3 5z" fill="#999"/></svg></button><button aria-label="Next sheet"><svg viewBox="0 0 12 10"><path d="M3 1v8l6-4z" fill="#999"/></svg></button><button aria-label="Last sheet"><svg viewBox="0 0 12 10"><path d="M1 1v8l5-4zM6 1v8l5-4z" fill="#444"/></svg></button>
  <button class="plus" aria-label="Add sheet">+</button><button class="stab">Sheet 1</button>
</div>
</div>
</main>

<footer class="status">
  <button class="on" aria-label="Navigator"><svg class="i18"><use href="#tree"/></svg></button><button aria-label="Browser"><svg class="i20"><use href="#globe"/></svg></button><button aria-label="Full screen"><svg class="i18"><use href="#plainbox"/></svg></button><span class="vr"></span>
  <span class="grow"></span>
  <span class="dots"><i class="go"></i><i></i><i></i></span>
  <button class="find" aria-label="Find"><svg class="i18"><use href="#binoc"/></svg><i></i><svg class="car"><use href="#caret"/></svg></button><span class="vr"></span>
  <label class="filter"><select aria-label="Selection filter"><option>General</option></select><svg class="car"><use href="#caret"/></svg></label>
</footer>
</div>
</body>
</html>
```
FILE: styles.css
```css
* { box-sizing: border-box; }
html, body { height: 100%; }
body { margin: 0; font: 12px/16px "Open Sans", "Noto Sans", sans-serif; color: #333; background: #fff; overflow: hidden; }
button { font: inherit; color: inherit; background: none; border: 0; padding: 0; margin: 0; }
h1, h2, ul { margin: 0; padding: 0; font-size: inherit; }
.sprite { position: absolute; width: 0; height: 0; }
.i18 { width: 18px; height: 18px; flex: none; }
.i20 { width: 20px; height: 20px; flex: none; }
.i32 { width: 32px; height: 32px; flex: none; }
.car { width: 8px; height: 5px; flex: none; color: #555; }
.more-car { width: 8px; height: 8px; }
.faint { color: #aaa; }
.icotext { font: bold 11px "Open Sans", sans-serif; fill: #333; }
.app { height: 100%; min-height: 720px; display: flex; flex-direction: column; }

/* title bar */
.titlebar { flex: none; height: 28px; display: grid; grid-template-columns: 1fr auto 1fr; align-items: center; background: #fafafc; }
.quick { display: flex; align-items: center; padding-left: 11px; }
.brand { width: 54px; padding-left: 6px; font: 18px/20px Lato, sans-serif; color: #3f4445; }
.vr { width: 1px; height: 24px; background: #ccc; margin: 0 3px; flex: none; }
.qb { width: 24px; height: 24px; display: flex; align-items: center; justify-content: center; gap: 4px; }
.qb.wide { width: 38px; }
.qb.slim { width: 18px; }
.qb.on { background: #dcdcdc; border: 1px solid #aaa; width: 37px; gap: 2px; }
.qb.on i { width: 1px; height: 22px; background: #aaa; }
.title { font-size: 13px; font-weight: 400; color: #444; }
.winbtns { display: flex; justify-content: flex-end; gap: 15px; padding-right: 11px; }
.winbtns svg { width: 12px; height: 12px; display: block; }

/* ribbon tabs */
.tabs { flex: none; height: 27px; display: grid; grid-template-columns: 59px 83px 80px 99px 82px 151px 90px 90px 74px 78px 108px 1fr; background: #3f4749; color: #fff; font-size: 13px; }
.tabs .file { background: linear-gradient(135deg, #63ce43, #4aa832); }
.tabs .active { background: #fff; color: #418a2f; }
.tabtools { display: flex; justify-content: flex-end; align-items: center; gap: 10px; padding: 0 9px 2px 0; }
.tabtools svg { width: 14px; height: 14px; display: block; }
.help { font-weight: 700; }

/* ribbon */
.ribbon { flex: none; height: 107px; display: flex; font: 11px/15px "Noto Sans", sans-serif; background: #fff; border-bottom: 1px solid #b3b8bc; }
.grp { display: flex; flex-direction: column; height: 105px; border-right: 1px solid #bbb; }
.g-delete { width: 132px; }
.g-group { width: 203px; }
.g-annot { width: 649px; }
.g-edit { width: 400px; }
.g-format { width: 227px; }
.body { display: grid; height: 84px; }
.g-delete .body { grid-template-columns: 1fr; padding-left: 6px; }
.g-group .body { grid-template-columns: 46px 40px 1fr; }
.g-annot .body { grid-template-columns: 82px 1px 74px 56px 148px 150px 1fr; }
.g-edit .body { grid-template-columns: 77px 106px 1px 79px 1fr; }
.g-format .body { grid-template-columns: 44px 38px 8px 1fr; }
.g-group .cmds { padding-left: 4px; }
.g-annot .cmds, .g-format .cmds { padding-left: 6px; }
.rule { width: 1px; height: 70px; margin-top: 6px; background: #ccc; }
.cmds { display: grid; grid-template-rows: 27px 27px 26px; align-content: start; white-space: nowrap; }
.cmds button { display: flex; align-items: center; gap: 3px; text-align: left; }
.cmds .car { margin-left: 5px; }
button:disabled { color: #a3a3a3; }
button:disabled .car { color: #999; }
.big { display: flex; flex-direction: column; align-items: center; gap: 9px; padding-top: 6px; white-space: nowrap; }
.big .car { margin-left: 3px; vertical-align: 2px; }
.glabel { display: flex; justify-content: center; align-items: center; gap: 4px; height: 21px; }

/* side panel */
.work { flex: 1; min-height: 0; display: flex; }
.side { width: 289px; flex: none; display: flex; flex-direction: column; background: #fdfcfe; }
.sidetabs { flex: none; height: 30px; display: grid; grid-template-columns: 98px 64px 64px 1fr; background: #e7ebec; font-size: 11px; color: #444; }
.sidetabs button { display: flex; align-items: center; gap: 4px; padding-left: 7px; white-space: nowrap; }
.sidetabs .active { background: #fff; padding-left: 9px; }
.fade { width: 26px; text-align: left; -webkit-mask-image: linear-gradient(90deg, #000 40%, #0003); mask-image: linear-gradient(90deg, #000 40%, #0003); }
.panel { display: flex; flex-direction: column; min-height: 0; }
.top { flex: 403 1 0; }
.bottom { flex: 405 1 0; margin: 0 5px 6px 0; border-top: 1px solid #e6e6ea; }
.phead { flex: none; height: 28px; display: flex; align-items: center; gap: 9px; padding: 0 9px 0 14px; background: #fff; }
.top .list { padding-top: 1px; }
.bottom .phead { height: 32px; padding: 1px 4px 0 14px; }
.phead h2 { flex: 1; font: bold 11px/16px "Noto Sans", sans-serif; margin-left: -3px; }
.phead button { display: flex; align-items: center; gap: 6px; }
.tw { width: 9px; height: 8px; color: #777; }
.list { list-style: none; flex: 1; font-size: 11px; line-height: 20px; color: #444; }
.list li { height: 20px; display: flex; align-items: center; gap: 4px; white-space: nowrap; }
.list b { width: 10px; height: 10px; margin-right: 2px; flex: none; }
.l0 { padding-left: 11px; }
.l1 { padding-left: 15px; }
.l2 { padding-left: 36px; }
.dn { background: #888; clip-path: polygon(0 10%, 100% 10%, 50% 90%); }
.rt { background: #888; clip-path: polygon(20% 0, 90% 50%, 20% 100%); }
.ic { width: 17px; height: 16px; flex: none; }
.w20 { width: 20px; }
.pad { padding-left: 4px; }
.scroller { flex: 1; min-height: 0; display: flex; overflow: hidden; }
.sbar { width: 15px; display: flex; flex-direction: column; background: #e3e3e6; }
.sb { height: 15px; flex: none; border: 1px solid #ccc; background: #f6f6f6; display: grid; place-items: center; }
.sb::after { content: ""; width: 7px; height: 5px; background: #999; clip-path: polygon(50% 0, 100% 100%, 0 100%); }
.sb.down::after { clip-path: polygon(0 0, 100% 0, 50% 100%); }
.thumb { flex: 1; margin-bottom: 8px; border: 1px solid #bbb; background: #fafafb; }

/* drawing area */
.stage { flex: 1; min-width: 0; display: flex; flex-direction: column; background: #e8eaee; padding-left: 1px; }
.canvas { flex: 1; min-height: 0; position: relative; }
.sheet { width: 100%; height: 100%; display: block; }
.viewbar { position: absolute; top: 7px; left: 50%; transform: translateX(-50%); height: 32px; display: flex; align-items: center; padding: 0 3px; background: #fdfdfd; border: 1px solid #b8bcc0; }
.viewbar button { width: 26px; height: 24px; display: grid; place-items: center; position: relative; }
.viewbar .more::after { content: ""; position: absolute; right: 1px; bottom: 0; border: 2px solid #555; border-top-color: transparent; border-left-color: transparent; }
.info { position: absolute; left: 18px; bottom: 1px; display: flex; font: 12px/16px "Liberation Sans", sans-serif; color: #8b8d92; white-space: nowrap; }
.info span:nth-child(1) { width: 100px; }
.info span:nth-child(2) { width: 91px; }
.info span:nth-child(3) { width: 147px; }
.frame path, .edge, .dim, .ctr, .grey, .red, .cut path { fill: none; stroke-width: 1; shape-rendering: crispEdges; }
.frame path { stroke: #000; }
.frame .blk { fill: #000; stroke: none; }
.frame .teal { stroke: #2b8a80; }
.edge, .frame .edge { stroke: #17548f; }
.soft { shape-rendering: auto; }
.soft * { shape-rendering: auto; }
.dim { stroke: #2a0a55; }
.ctr { stroke: #7b6470; stroke-dasharray: 7 2 2 2; }
.grey { stroke: #999ba2; }
.red { stroke: #a33b3b; }
.cut path { fill: url(#hatch); stroke: #17548f; }
.zone, .val { font: 8px "Liberation Sans", sans-serif; text-anchor: middle; fill: #000; }
.val { fill: #2a0a55; }
.blue { fill: #17548f; }
.cap { font: 8px "Liberation Mono", monospace; text-anchor: middle; fill: #2a0a55; }
.iso path, .iso ellipse { stroke: #111; stroke-width: 3; }
.block path, .block circle { fill: none; stroke: #000; stroke-width: 3; shape-rendering: crispEdges; }
.block .scrib { stroke-width: 10; stroke-dasharray: 5 2; }
.tb { font: 8px "Liberation Mono", monospace; fill: #3a1270; }
.mid { text-anchor: middle; }
.tb2 { font: 6px "Liberation Sans", sans-serif; fill: #000; }
.pop { font-size: 8px; }
.a2 { font-size: 10px; }

/* sheet tabs */
.sheetbar { flex: none; height: 28px; margin-left: 2px; display: flex; align-items: stretch; border-top: 1px solid #888; border-bottom: 1px solid #888; background: linear-gradient(#f0f0f0 3px, #888 3px, #888 4px, #dedede 4px); padding-left: 3px; }
.sheetbar button { width: 17px; padding-top: 4px; display: grid; place-items: center; }
.sheetbar svg { width: 12px; height: 10px; }
.sheetbar .plus { width: 21px; height: 17px; padding: 0; margin-top: 4px; margin-left: 3px; border: 1px solid #888; line-height: 14px; font-weight: 700; }
.sheetbar .stab { width: 77px; padding: 0 0 2px; background: #f2f2f2; border-right: 1px solid #888; font-weight: 700; }

/* status bar */
.status { flex: none; height: 34px; display: flex; align-items: center; gap: 4px; padding: 0 18px 2px 6px; border-top: 1px solid #b0b3b6; background: #fff; }
.status button { width: 22px; height: 22px; display: grid; place-items: center; }
.status .on { background: #e2e2e2; border: 1px solid #aaa; }
.status .vr { margin: 0 5px; }
.grow { flex: 1; }
.dots { display: flex; align-items: center; gap: 2px; margin-right: 4px; }
.dots i { width: 6px; height: 6px; border-radius: 50%; background: #c9c9c9; }
.dots .go { width: 10px; height: 10px; background: #55d043; }
.status .find { width: 42px; display: flex; align-items: center; justify-content: space-around; border: 1px solid #ccc; }
.find i { width: 1px; height: 20px; background: #ccc; }
.filter { width: 165px; height: 22px; margin-left: 76px; position: relative; }
.filter select { width: 100%; height: 100%; appearance: none; border: 1px solid #aaa; border-radius: 0; padding: 0 7px; background: linear-gradient(90deg, #fff 148px, #aaa 148px, #aaa 149px, #f4f4f4 149px); font: 11px "Open Sans", sans-serif; color: #444; }
.filter .car { position: absolute; right: 4px; top: 9px; }
```
